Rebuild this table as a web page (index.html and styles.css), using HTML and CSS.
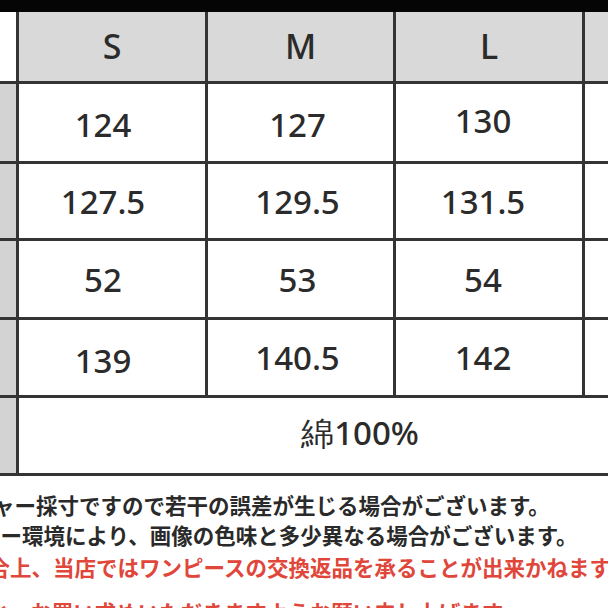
FILE: index.html
```html
<!DOCTYPE html>
<html lang="ja">
<head>
<meta charset="utf-8">
<title>サイズ表</title>
<link rel="stylesheet" href="styles.css">
</head>
<body>
<div class="page">
  <div class="topband"></div>
  <div class="table">
    <div class="cell side head-side"></div>
    <div class="cell head">S</div>
    <div class="cell head">M</div>
    <div class="cell head">L</div>
    <div class="cell head"></div>

    <div class="cell side"></div>
    <div class="cell c1 r1">124</div>
    <div class="cell c2 r1">127</div>
    <div class="cell c3 r1b">130</div>
    <div class="cell"></div>

    <div class="cell side"></div>
    <div class="cell c1">127.5</div>
    <div class="cell c2">129.5</div>
    <div class="cell c3">131.5</div>
    <div class="cell"></div>

    <div class="cell side"></div>
    <div class="cell c1">52</div>
    <div class="cell c2">53</div>
    <div class="cell c3">54</div>
    <div class="cell"></div>

    <div class="cell side"></div>
    <div class="cell c1 r4">139</div>
    <div class="cell c2">140.5</div>
    <div class="cell c3">142</div>
    <div class="cell"></div>

    <div class="cell side"></div>
    <div class="cell merged">綿100%</div>
  </div>
  <div class="notes">
    <p class="note n1">メジャー採寸ですので若干の誤差が生じる場合がございます。</p>
    <p class="note n2">モニター環境により、画像の色味と多少異なる場合がございます。</p>
    <p class="note n3 red">都合上、当店ではワンピースの交換返品を承ることが出来かねます。</p>
    <p class="note n4 red">と、お買い求めいただきますようお願い申し上げます。</p>
  </div>
</div>
</body>
</html>
```

FILE: styles.css
```css
html, body {
  margin: 0;
  padding: 0;
  background: #ffffff;
}

body {
  width: 608px;
  height: 608px;
  overflow: hidden;
}

.page {
  width: 608px;
  height: 608px;
  overflow: hidden;
  background: #ffffff;
}

.topband {
  height: 12px;
  background: #050505;
}

.table {
  display: grid;
  grid-template-columns: 16px 186px 185px 186px 23px;
  grid-template-rows: 69px 77px 74px 76px 75px 75px;
  column-gap: 3px;
  row-gap: 3px;
  background: #343434;
  border-bottom: 3px solid #343434;
}

.cell {
  background: #ffffff;
  display: flex;
  align-items: center;
  justify-content: center;
  font-family: "Noto Sans", "Open Sans", sans-serif;
  font-weight: 500;
  font-size: 33px;
  color: #2b2b2b;
}

.side {
  background: #d3d3d3;
}

.head-side {
  background: #ffffff;
}

.head {
  background: #d9d9d9;
  font-size: 34px;
  padding-bottom: 2px;
}

.c1 {
  padding-right: 18px;
}

.c2 {
  padding-right: 6px;
}

.c3 {
  padding-right: 12px;
}

.r1 {
  padding-top: 4px;
}

.r1b {
  padding-bottom: 4px;
}

.r4 {
  padding-top: 6px;
}

.merged {
  grid-column: 2 / 6;
  padding-left: 93px;
  padding-bottom: 4px;
}

.notes {
  font-family: "Noto Sans CJK JP", "Noto Sans", sans-serif;
  font-weight: 700;
  font-size: 21.5px;
  color: #2a2a2a;
  white-space: nowrap;
}

.note {
  margin: 0;
  height: 30px;
  line-height: 30px;
}

.n1 {
  margin-top: 14px;
  text-indent: -49px;
}

.n2 {
  text-indent: -64px;
}

.n3 {
  margin-top: 2px;
  text-indent: -33px;
}

.n4 {
  margin-top: 15px;
  text-indent: -12px;
}

.red {
  color: #e0463a;
}
```
